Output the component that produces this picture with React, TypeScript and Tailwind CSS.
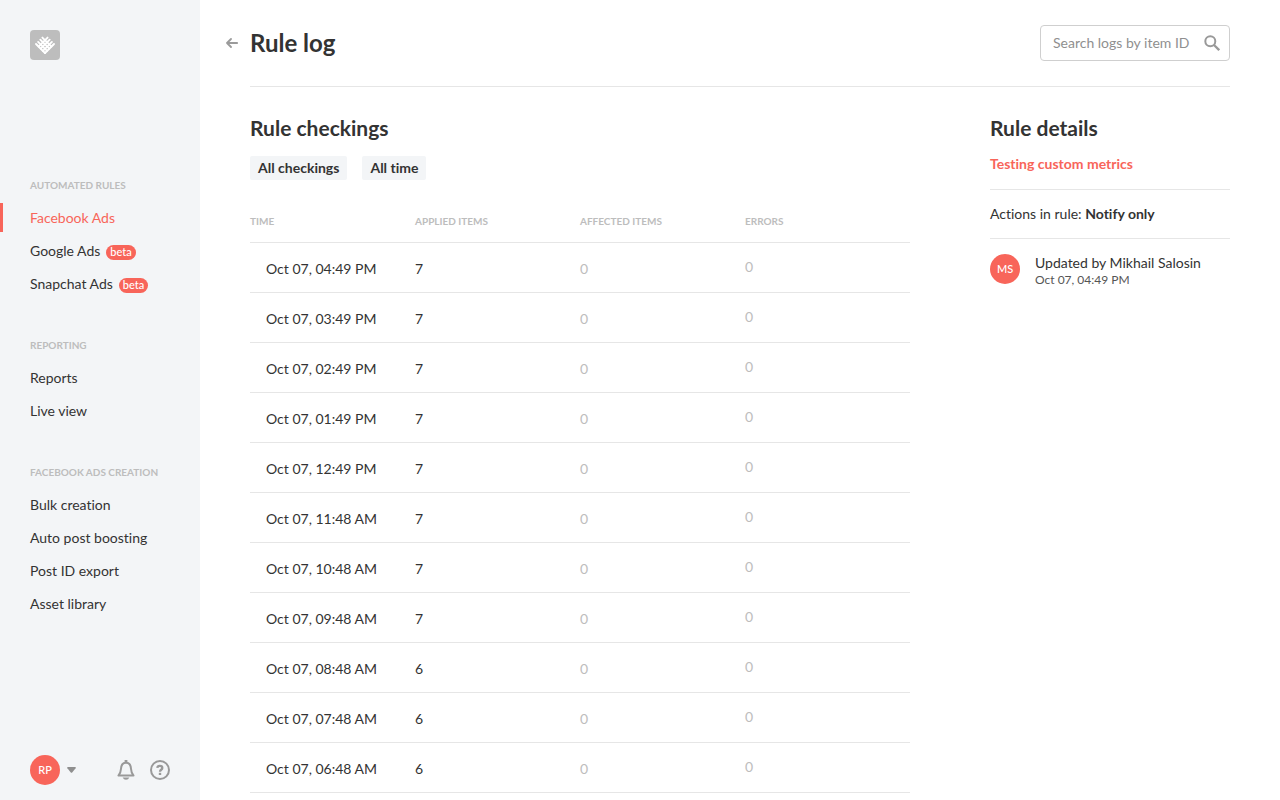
import type { ReactNode } from "react";

type NavItem = { label: string; beta?: boolean; active?: boolean };
type NavSection = { title: string; items: NavItem[] };

const sections: NavSection[] = [
  {
    title: "Automated rules",
    items: [
      { label: "Facebook Ads", active: true },
      { label: "Google Ads", beta: true },
      { label: "Snapchat Ads", beta: true },
    ],
  },
  { title: "Reporting", items: [{ label: "Reports" }, { label: "Live view" }] },
  {
    title: "Facebook ads creation",
    items: [
      { label: "Bulk creation" },
      { label: "Auto post boosting" },
      { label: "Post ID export" },
      { label: "Asset library" },
    ],
  },
];

const rows = [
  { time: "Oct 07, 04:49 PM", applied: 7, affected: 0, errors: 0 },
  { time: "Oct 07, 03:49 PM", applied: 7, affected: 0, errors: 0 },
  { time: "Oct 07, 02:49 PM", applied: 7, affected: 0, errors: 0 },
  { time: "Oct 07, 01:49 PM", applied: 7, affected: 0, errors: 0 },
  { time: "Oct 07, 12:49 PM", applied: 7, affected: 0, errors: 0 },
  { time: "Oct 07, 11:48 AM", applied: 7, affected: 0, errors: 0 },
  { time: "Oct 07, 10:48 AM", applied: 7, affected: 0, errors: 0 },
  { time: "Oct 07, 09:48 AM", applied: 7, affected: 0, errors: 0 },
  { time: "Oct 07, 08:48 AM", applied: 6, affected: 0, errors: 0 },
  { time: "Oct 07, 07:48 AM", applied: 6, affected: 0, errors: 0 },
  { time: "Oct 07, 06:48 AM", applied: 6, affected: 0, errors: 0 },
];

function Avatar({ children }: { children: ReactNode }) {
  return (
    <span className="flex size-[30px] shrink-0 items-center justify-center rounded-full bg-[#f8655a] text-[11px] font-medium text-white">
      {children}
    </span>
  );
}

function Logo() {
  return (
    <svg viewBox="0 0 30 30" className="size-[30px]" aria-hidden="true">
      <rect width="30" height="30" rx="4" fill="#bdbdbd" />
      <g stroke="#fff" strokeWidth="1.900" strokeLinecap="round">
        <path d="M6 14l9 9M8.100 11.900l9 9M10.300 9.700l9 9M12.400 7.600l9 9" />
        <path d="M24 14l-9 9M21.900 11.900l-9 9M19.700 9.700l-9 9M17.600 7.600l-9 9" />
      </g>
    </svg>
  );
}

function Sidebar() {
  return (
    <aside className="sticky top-0 flex h-screen w-[200px] shrink-0 flex-col bg-[#f3f5f7] pt-[30px] pb-[15px]">
      <a href="#" aria-label="Home" className="ml-[30px] self-start">
        <Logo />
      </a>
      <nav className="mt-[119px] flex flex-1 flex-col gap-[41px]">
        {sections.map((section) => (
          <section key={section.title}>
            <h2 className="mb-3 pl-[30px] text-[10px] leading-[12px] font-bold text-[#bdbdbd] uppercase">
              {section.title}
            </h2>
            <ul className="flex flex-col gap-1">
              {section.items.map((item) => (
                <li key={item.label}>
                  <a
                    href="#"
                    className={
                      item.active
                        ? "flex h-[29px] items-center border-l-3 border-[#f8655a] pl-[27px] text-[#f8655a]"
                        : "flex h-[29px] items-center border-l-3 border-transparent pl-[27px]"
                    }
                  >
                    {item.label}
                    {item.beta && (
                      <span className="mt-[3px] ml-1.5 flex h-[15px] items-center rounded-full bg-[#f8655a] px-1 text-[11px] font-medium text-white">
                        beta
                      </span>
                    )}
                  </a>
                </li>
              ))}
            </ul>
          </section>
        ))}
      </nav>
      <div className="flex items-center px-[30px]">
        <button type="button" aria-label="Account menu" className="flex items-center gap-[7px]">
          <Avatar>RP</Avatar>
          <svg viewBox="0 0 9 6" className="h-1.5 w-[9px]" aria-hidden="true">
            <path d="M.8 0h7.4q1 .3.4 1.200L5.200 5.500q-.7.7-1.400 0L.4 1.200Q-.2.3.8 0Z" fill="#8f8f8f" />
          </svg>
        </button>
        <button type="button" aria-label="Notifications" className="ml-auto">
          <svg viewBox="0 0 18 20" className="h-5 w-[18px]" fill="none" stroke="#999" aria-hidden="true">
            <path d="M1.500 15.500h15c-2-1.900-2.300-3.700-2.500-6.700-.2-3.800-1.800-6.100-5-6.100S4.200 5 4 8.800c-.2 3-.5 4.800-2.500 6.700Z" strokeWidth="2" strokeLinejoin="round" />
            <path d="M9 0v2.500" strokeWidth="2.800" />
            <path d="M5.600 17.500h6.800Q11.300 19.800 9 19.800T5.600 17.500Z" fill="#999" stroke="none" />
          </svg>
        </button>
        <button type="button" aria-label="Help" className="ml-[15px]">
          <svg viewBox="0 0 20 20" className="size-5" fill="none" stroke="#999" aria-hidden="true">
            <circle cx="10" cy="10" r="9" strokeWidth="2" />
            <path d="M7.300 7.900C7.600 5.200 12.300 5.400 12.300 8c0 1.800-2.300 1.700-2.300 3.700" strokeWidth="2.300" />
            <path d="M8.800 12.800h2.400v2.200H8.800z" fill="#999" stroke="none" />
          </svg>
        </button>
      </div>
    </aside>
  );
}

function CheckingsTable() {
  return (
    <table className="mt-5 w-full table-fixed border-collapse text-left">
      <thead>
        <tr className="h-[42px] border-b border-[#e6e6e6] text-[10px] text-[#bdbdbd] uppercase">
          <th className="p-0 font-bold">Time</th>
          <th className="p-0 font-bold">Applied items</th>
          <th className="p-0 font-bold">Affected items</th>
          <th className="p-0 font-bold">Errors</th>
        </tr>
      </thead>
      <tbody>
        {rows.map((row) => (
          <tr key={row.time} className="h-[50px] border-b border-[#e6e6e6]">
            <td className="pt-1 pl-4">{row.time}</td>
            <td className="pt-1">{row.applied}</td>
            <td className="pt-1 text-[#bdbdbd]">{row.affected}</td>
            <td className="text-[#bdbdbd]">{row.errors}</td>
          </tr>
        ))}
      </tbody>
    </table>
  );
}

export default function App() {
  return (
    <div className="flex min-h-screen bg-white font-[Lato,sans-serif] text-[14px] leading-5 text-[#333] [font-variant-ligatures:none]">
      <Sidebar />
      <main className="min-w-0 flex-1 px-[50px]">
        <header className="flex h-[87px] items-center border-b border-[#e6e6e6]">
          <button type="button" aria-label="Back" className="mr-3 -ml-6">
            <svg viewBox="0 0 12 10" className="h-2.5 w-3" fill="none" stroke="#9b9b9b" strokeWidth="1.800" strokeLinecap="round" strokeLinejoin="round" aria-hidden="true">
              <path d="M11.200 5H1M5 1 1 5l4 4" />
            </svg>
          </button>
          <h1 className="text-2xl font-bold">Rule log</h1>
          <label className="ml-auto flex h-9 w-[190px] items-center rounded border border-[#cfcfcf] pr-[9px] pl-3">
            <input
              type="text"
              aria-label="Search logs by item ID"
              placeholder="Search logs by item ID"
              className="min-w-0 flex-1 outline-none placeholder:text-[#8f8f8f]"
            />
            <svg viewBox="0 0 16 16" className="size-4" fill="none" stroke="#999" strokeWidth="2" aria-hidden="true">
              <circle cx="6.300" cy="6.300" r="5" />
              <path d="m10 10 5.200 5.200" strokeWidth="2.300" />
            </svg>
          </label>
        </header>
        <div className="flex gap-20 pt-[27px]">
          <section className="min-w-0 flex-1">
            <h2 className="text-[21px] leading-7 font-bold">Rule checkings</h2>
            <div className="mt-3.5 flex gap-[15px]">
              <button type="button" className="h-6 rounded-xs bg-[#f3f5f7] px-2 font-bold">
                All checkings
              </button>
              <button type="button" className="h-6 rounded-xs bg-[#f3f5f7] px-2 font-bold">
                All time
              </button>
            </div>
            <CheckingsTable />
          </section>
          <aside className="w-60 shrink-0">
            <h2 className="text-[21px] leading-7 font-bold">Rule details</h2>
            <div className="mt-3 border-b border-[#e6e6e6] pb-[15px]">
              <a href="#" className="block font-bold text-[#f8655a]">
                Testing custom metrics
              </a>
            </div>
            <p className="border-b border-[#e6e6e6] py-3.5">
              Actions in rule: <b className="font-bold">Notify only</b>
            </p>
            <div className="flex items-start gap-[15px] pt-[15px]">
              <Avatar>MS</Avatar>
              <div>
                <p className="leading-[18px]">Updated by Mikhail Salosin</p>
                <p className="text-xs leading-4 text-[#555]">Oct 07, 04:49 PM</p>
              </div>
            </div>
          </aside>
        </div>
      </main>
    </div>
  );
}
